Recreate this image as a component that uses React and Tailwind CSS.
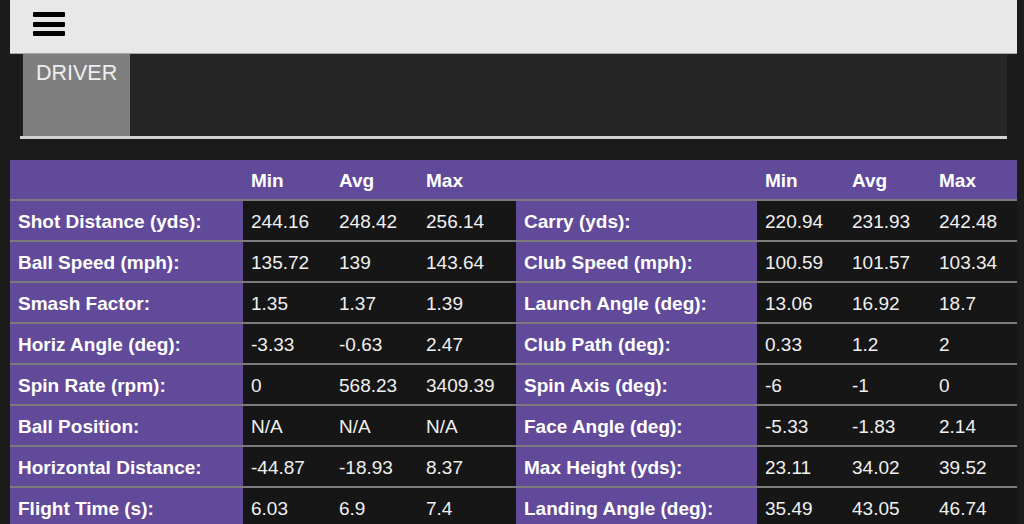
import React from "react";

const rows = [
  ["Shot Distance (yds):", "244.16", "248.42", "256.14", "Carry (yds):", "220.94", "231.93", "242.48"],
  ["Ball Speed (mph):", "135.72", "139", "143.64", "Club Speed (mph):", "100.59", "101.57", "103.34"],
  ["Smash Factor:", "1.35", "1.37", "1.39", "Launch Angle (deg):", "13.06", "16.92", "18.7"],
  ["Horiz Angle (deg):", "-3.33", "-0.63", "2.47", "Club Path (deg):", "0.33", "1.2", "2"],
  ["Spin Rate (rpm):", "0", "568.23", "3409.39", "Spin Axis (deg):", "-6", "-1", "0"],
  ["Ball Position:", "N/A", "N/A", "N/A", "Face Angle (deg):", "-5.33", "-1.83", "2.14"],
  ["Horizontal Distance:", "-44.87", "-18.93", "8.37", "Max Height (yds):", "23.11", "34.02", "39.52"],
  ["Flight Time (s):", "6.03", "6.9", "7.4", "Landing Angle (deg):", "35.49", "43.05", "46.74"],
];

const widths = ["w-[233px]", "w-[88px]", "w-[87px]", "w-[98px]", "w-[241px]", "w-[87px]", "w-[87px]", "w-[86px]"];

function Row({ cells, header }) {
  return (
    <div
      className={
        "flex " +
        (header ? "h-[39px]" : "h-[41px] border-t-2 border-[#7b7b7b]")
      }
    >
      {cells.map((c, i) => {
        const isLabel = i === 0 || i === 4;
        const bg = header || isLabel ? "bg-[#614a99]" : "bg-[#161616]";
        const weight = header || isLabel ? "font-bold text-white" : "text-[#f0f0f0]";
        return (
          <div key={i} className={`${widths[i]} shrink-0 ${bg} ${weight} pl-2 pt-[3px] flex items-center`}>
            {c}
          </div>
        );
      })}
    </div>
  );
}

export default function App() {
  return (
    <div
      className="w-[1024px] h-[524px] overflow-hidden bg-[#1b1b1b]"
      style={{ fontFamily: '"Liberation Sans", Arial, sans-serif' }}
    >
      <div className="mx-[10px] w-[1007px] h-[54px] bg-[#e8e8e8] border-b border-[#a8a8a8] flex items-center pl-[23px]">
        <div className="flex flex-col gap-[4.5px] mt-[-5px]">
          <div className="w-[32px] h-[5px] bg-black rounded-[1px]" />
          <div className="w-[32px] h-[5px] bg-black rounded-[1px]" />
          <div className="w-[32px] h-[5px] bg-black rounded-[1px]" />
        </div>
      </div>
      <div className="ml-[20px] w-[987px]">
        <div className="h-[82px] bg-[#262626] flex border-l-[3px] border-[#1f1f1f]">
          <div className="w-[107px] bg-[#7f7f7f] text-[#eeeeee] text-[21.5px] pl-[13px] pt-[3px]">
            DRIVER
          </div>
        </div>
        <div className="h-[3px] bg-[#d2d2d2]" />
      </div>
      <div className="mt-[21px] ml-[10px] w-[1007px] text-[19px]">
        <Row header cells={["", "Min", "Avg", "Max", "", "Min", "Avg", "Max"]} />
        {rows.map((r, i) => (
          <Row key={i} cells={r} />
        ))}
      </div>
    </div>
  );
}
